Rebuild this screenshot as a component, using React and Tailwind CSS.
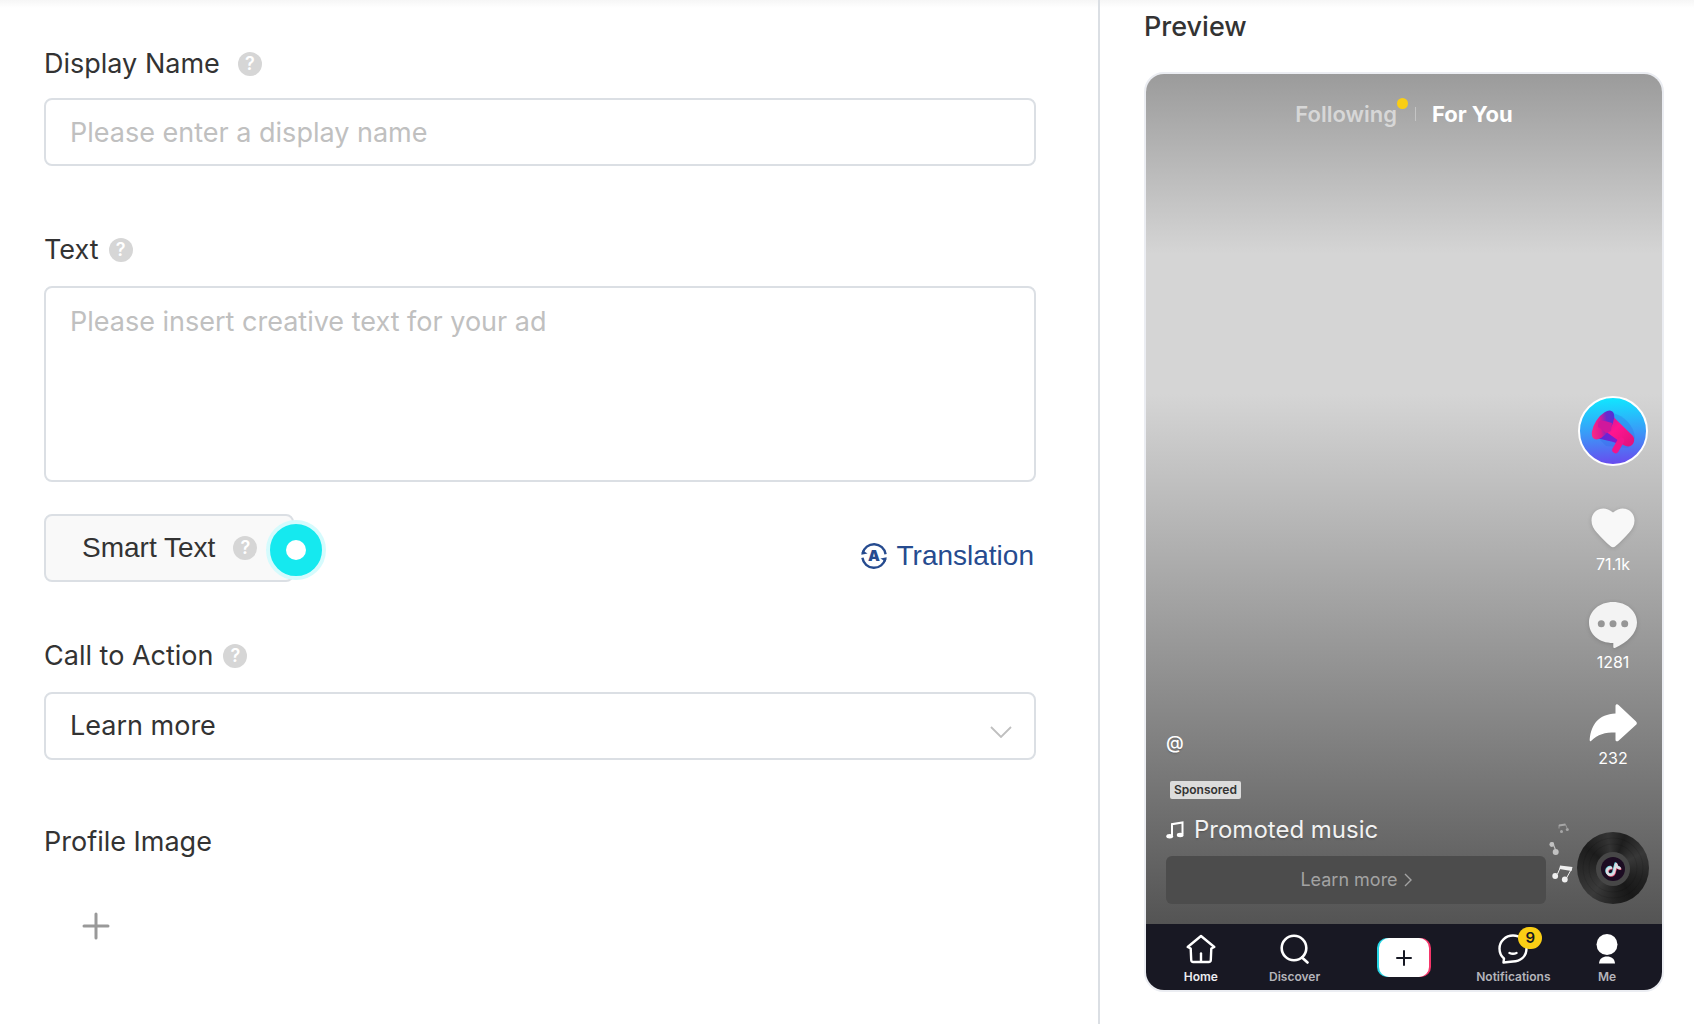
import { useState } from 'react'

function Hint({ label }) {
  return (
    <span
      role="img"
      aria-label={label}
      className="flex size-6 shrink-0 items-center justify-center rounded-full bg-[#d6d6d6] font-['Inter',sans-serif] text-lg leading-none font-semibold text-white"
    >
      ?
    </span>
  )
}

function TranslateIcon() {
  return (
    <svg viewBox="0 0 26 26" className="size-[26px]" fill="none" stroke="currentColor" strokeWidth="2.4" aria-hidden="true">
      <path d="M1.6 10.400A11.700 11.700 0 0 1 24.600 11.200" />
      <path d="M24.400 15.600A11.700 11.700 0 0 1 1.400 14.800" />
      <path d="M.3 11.800 1.200 7.200 6.600 10.400Z" fill="currentColor" stroke="none" />
      <path d="M25.700 14.200 24.800 18.800 19.400 15.600Z" fill="currentColor" stroke="none" />
      <text x="13" y="18.400" textAnchor="middle" fontSize="15" fontWeight="900" fontFamily="Inter, sans-serif" fill="currentColor" stroke="none">A</text>
    </svg>
  )
}

function MegaphoneAvatar() {
  return (
    <svg viewBox="0 0 70 70" className="size-[70px]" aria-hidden="true">
      <defs>
        <linearGradient id="avatar-bg" x1="0.5" y1="0" x2="0.55" y2="1">
          <stop offset="0" stopColor="#0fe9ff" />
          <stop offset="0.5" stopColor="#389df8" />
          <stop offset="1" stopColor="#6a48ee" />
        </linearGradient>
        <linearGradient id="cone" x1="0.1" y1="0.2" x2="0.9" y2="0.9">
          <stop offset="0" stopColor="#c2189f" />
          <stop offset="0.45" stopColor="#ff1590" />
          <stop offset="1" stopColor="#e3137f" />
        </linearGradient>
        <linearGradient id="mouth" x1="0.8" y1="0" x2="0.2" y2="1">
          <stop offset="0" stopColor="#4a35d8" />
          <stop offset="0.35" stopColor="#6a2bcc" />
          <stop offset="0.6" stopColor="#e01a94" />
          <stop offset="1" stopColor="#ff2f80" />
        </linearGradient>
        <linearGradient id="cone-shade" x1="0" y1="0" x2="1" y2="0">
          <stop offset="0" stopColor="#4f2fdc" />
          <stop offset="1" stopColor="#8a18cc" />
        </linearGradient>
      </defs>
      <circle cx="35" cy="35" r="34" fill="url(#avatar-bg)" stroke="#fff" strokeWidth="2" />
      <path d="M35 17C46 20 56 29 57 42L50 52 28 50 22 44Z" fill="#2f6be4" opacity="0.3" />
      <path d="M34.500 16.500 36.500 22 54.500 39.500C58 43 56 50.500 50 50.500 47 50.500 44 48 40 45.500L20 42.500 24 28Z" fill="url(#cone)" />
      <path d="M19 42.500 27 35 41 45 38 47C32 45 26 43.500 19 42.500Z" fill="url(#cone-shade)" />
      <path d="M43 44.500 37.500 54" stroke="#f3158c" strokeWidth="6.500" strokeLinecap="round" />
      <ellipse cx="25" cy="29" rx="8" ry="16.500" transform="rotate(33 25 29)" fill="url(#mouth)" />
      <path d="M20.500 25.500C25 23.500 29 26 34 27L33 35 28 37C26 35 24 33 20 31Z" fill="#d0189c" />
    </svg>
  )
}

function HeartIcon() {
  return (
    <svg viewBox="0 0 44 40" className="h-10 w-11 drop-shadow-sm" fill="#f8f8f8" aria-hidden="true">
      <path d="M22 4.600C18.500 1.500 15.500.5 12.300.5 5.500.5.500 5.800.500 12.500c0 5 2.200 8.500 5.500 12.200C10 29.200 15 34.200 19.600 38.300c1.500 1.300 3.300 1.300 4.800 0C29 34.200 34 29.200 38 24.700c3.300-3.700 5.500-7.200 5.500-12.200C43.500 5.800 38.500.5 31.700.5c-3.200 0-6.200 1-9.700 4.100Z" />
    </svg>
  )
}

function CommentIcon() {
  return (
    <svg viewBox="0 0 48 44" className="h-11 w-12 overflow-visible drop-shadow-sm" aria-hidden="true">
      <path d="M24 0C10.500 0 0 9 0 20.500 0 32.500 10 41 24.300 41v4c0 1 .7 1.300 1.600.9C38 40.500 48 31.500 48 20.500 48 9 37.500 0 24 0Z" fill="#f3f3f3" />
      <circle cx="12.300" cy="21.700" r="3.500" fill="#969696" />
      <circle cx="24" cy="21.700" r="3.500" fill="#969696" />
      <circle cx="35.700" cy="21.700" r="3.500" fill="#969696" />
    </svg>
  )
}

function ShareIcon() {
  return (
    <svg viewBox="0 -4 48 42" className="h-[42px] w-12" fill="#fff" aria-hidden="true">
      <path d="M26.500 2C26.500.4 28.200-.2 29.500.9L46.800 17.200c1.400 1.300 1.400 2.600 0 3.900L29.500 36.800c-1.300 1.100-3 .5-3-1.100V28.400C16 28.400 8.500 30 2.600 36.600 1.300 38 .5 37 .7 35.200 2.500 20 9.500 10.200 26.500 9.400Z" />
    </svg>
  )
}

function NoteIcon() {
  return (
    <svg viewBox="0 0 18 18" className="size-[18px]" aria-hidden="true">
      <path d="M6 14.500V3.200L16.500 1.500V13" fill="none" stroke="#fff" strokeWidth="2" />
      <ellipse cx="3.700" cy="15.200" rx="3.400" ry="2.200" fill="#fff" />
      <ellipse cx="14.200" cy="14" rx="3.400" ry="2.200" fill="#fff" />
    </svg>
  )
}

function FloatingNotes() {
  return (
    <svg viewBox="0 0 26 64" className="absolute right-full bottom-5 mr-0.5 h-16 w-[26px]" aria-hidden="true">
      <g stroke="#fff" fill="#fff" opacity="0.4">
        <path d="M10 5.500 16.500 4.500" fill="none" strokeWidth="2" />
        <path d="M10 8.500 10 5M16.500 4.500 18 8" fill="none" strokeWidth="0.800" />
        <circle cx="12.500" cy="11.500" r="1.500" stroke="none" />
        <circle cx="18.300" cy="9.500" r="1.500" stroke="none" />
      </g>
      <g stroke="#fff" fill="#fff" opacity="0.6">
        <path d="M7 31 3.500 22.500" fill="none" strokeWidth="1.200" />
        <circle cx="2.800" cy="24.500" r="2.400" stroke="none" />
        <circle cx="6.700" cy="32" r="3" stroke="none" />
      </g>
      <g stroke="#fff" fill="#fff" opacity="0.9">
        <path d="M8.500 54 11.500 47M22.500 49 17.500 58" fill="none" strokeWidth="1" />
        <path d="M11 45.500 23.500 47 22.500 51 10.500 49Z" stroke="none" />
        <circle cx="6.200" cy="56" r="2.900" stroke="none" />
        <circle cx="15.800" cy="59.500" r="2.900" stroke="none" />
      </g>
    </svg>
  )
}

function Disc() {
  return (
    <div className="relative size-[72px] rounded-full bg-[conic-gradient(from_20deg,#1e1e1e,#383838_12%,#222_25%,#181818_35%,#202020_42%,#3a3a3a_55%,#2a2a2a_68%,#1c1c1c_80%,#343434_92%,#1e1e1e)]">
      <FloatingNotes />
      <svg viewBox="0 0 72 72" className="size-[72px]" fill="none" aria-hidden="true">
        <circle cx="36" cy="36" r="30" stroke="#000" strokeOpacity="0.1" />
        <circle cx="36" cy="36" r="24" stroke="#000" strokeOpacity="0.1" />
        <circle cx="36" cy="37" r="17" fill="#474747" />
        <circle cx="36" cy="37" r="12" fill="#1c0c22" />
        <g strokeWidth="2.400" strokeLinecap="round" transform="rotate(15 36 37)">
          <path d="M38.500 32 38.500 39.500A3.600 3.600 0 1 1 34.500 36.800M38.500 32Q39.500 35 43 35" stroke="#f0567a" />
          <path d="M37 31 37 38.500A3.600 3.600 0 1 1 33 35.800M37 31Q38 34 41.500 34" stroke="#6fd9e0" />
          <path d="M37.800 31.500 37.800 39A3.600 3.600 0 1 1 33.800 36.300M37.800 31.500Q38.800 34.500 42.300 34.500" stroke="#dcdce2" />
        </g>
      </svg>
    </div>
  )
}

function HomeIcon() {
  return (
    <svg viewBox="0 0 30 30" className="size-[30px]" fill="none" stroke="#fff" strokeWidth="2.400" strokeLinejoin="round" strokeLinecap="round" aria-hidden="true">
      <path d="M15 2 28.300 13 25.300 14.500 24.800 26Q24.700 28 22.700 28H7.300Q5.300 28 5.200 26L4.700 14.500 1.700 13Z" />
      <path d="M15 19.500V27" />
    </svg>
  )
}

function DiscoverIcon() {
  return (
    <svg viewBox="0 0 30 30" className="size-[30px]" fill="none" stroke="#fff" strokeWidth="2.600" strokeLinecap="round" aria-hidden="true">
      <circle cx="14" cy="14" r="12.300" />
      <path d="M22 23.500 27.500 28.500" />
    </svg>
  )
}

function InboxIcon() {
  return (
    <svg viewBox="0 0 30 30" className="size-[30px]" fill="none" stroke="#fff" strokeWidth="2.400" strokeLinecap="round" strokeLinejoin="round" aria-hidden="true">
      <path d="M15 1.500A13.500 13 0 0 1 28.500 14.500C28.500 23 22 27.500 15 27.500L5.500 28.500 6 24.500C3 22 1.500 18.500 1.500 14.500A13.500 13 0 0 1 15 1.500Z" />
      <path d="M11.500 19Q15 20.500 18.500 19" />
    </svg>
  )
}

function MeIcon() {
  return (
    <svg viewBox="0 0 30 30" className="size-[30px]" fill="#fff" aria-hidden="true">
      <circle cx="15" cy="10.500" r="10.500" />
      <path d="M7 29.500C7.500 24.500 10.500 22.500 15 22.500S22.500 24.500 23 29.500Z" />
    </svg>
  )
}

function RailButton({ icon, count, label }) {
  return (
    <button type="button" aria-label={label} className="flex flex-col items-center gap-1.5 text-base leading-5 text-white">
      {icon}
      {count}
    </button>
  )
}

function NavButton({ icon, label, badge, active }) {
  return (
    <button
      type="button"
      className={`flex flex-3 flex-col items-center gap-[3px] text-xs leading-5 font-semibold ${active ? 'text-[#ececf0]' : 'text-[#b4b4ba]'}`}
    >
      <span className="relative">
        {icon}
        {badge && (
          <span className="absolute -top-[7px] left-5 flex h-[22px] w-6 items-center justify-center rounded-full bg-[#face15] text-[15px] text-[#161823]">
            {badge}
          </span>
        )}
      </span>
      {label}
    </button>
  )
}

function PhonePreview({ name, cta }) {
  return (
    <div className="overflow-hidden rounded-[20px] border-2 border-[#ebedf2]">
      <div className="flex min-h-[850px] flex-col bg-[linear-gradient(#9b9b9b_0px,#d5d5d5_180px,#d5d5d5_320px,#545454_850px)]">
        <div className="flex items-center justify-center pt-6 text-[22px] leading-8 font-semibold">
          <button type="button" className="relative text-[#d7d7d7]">
            Following
            <span className="absolute top-0 left-full size-[11px] rounded-full bg-[#face15]" />
          </button>
          <span className="mr-4 ml-[18px] h-3.5 w-px bg-[#c4c4c4]" />
          <button type="button" className="font-bold text-white">For You</button>
        </div>

        <div className="flex flex-1 items-end gap-[31px] pr-[13px] pb-5 pl-5">
          <div className="flex flex-1 flex-col items-start text-white">
            <p className="text-lg leading-6 font-medium text-shadow-sm">@{name}</p>
            <span className="mt-6.5 ml-1 rounded-xs bg-[#dcdcdc] px-1 text-xs leading-[18px] font-semibold text-[#333]">
              Sponsored
            </span>
            <p className="mt-[15px] flex items-center gap-2.5 text-2xl leading-8 text-[#f2f2f2] text-shadow-sm">
              <NoteIcon />
              Promoted music
            </p>
            <button type="button" className="mt-2.5 flex h-12 w-full items-center justify-center gap-1.5 rounded-md bg-[#4c4c4c] text-lg text-[#a3a3a3]">
              {cta}
              <svg viewBox="0 0 8 14" className="h-3.5 w-2" fill="none" stroke="currentColor" strokeWidth="1.400" aria-hidden="true">
                <path d="M1 1 7 7 1 13" />
              </svg>
            </button>
          </div>

          <div className="flex w-[72px] flex-col items-center gap-7">
            <button type="button" aria-label="Advertiser profile" className="mb-3.5">
              <MegaphoneAvatar />
            </button>
            <RailButton label="Like" icon={<HeartIcon />} count="71.1k" />
            <RailButton label="Comment" icon={<CommentIcon />} count="1281" />
            <RailButton label="Share" icon={<ShareIcon />} count="232" />
            <div className="mt-9">
              <Disc />
            </div>
          </div>
        </div>
      </div>

      <nav aria-label="App navigation" className="flex h-[66px] items-start bg-[#181823] px-2 pt-2.5">
        <NavButton icon={<HomeIcon />} label="Home" active />
        <NavButton icon={<DiscoverIcon />} label="Discover" />
        <div className="flex flex-4 justify-center pt-1">
          <button
            type="button"
            aria-label="Create"
            className="flex h-[39px] w-[54px] items-center justify-center rounded-[10px] bg-[linear-gradient(90deg,#25d5e4_50%,#f5366a_50%)] px-0.5"
          >
            <span className="flex h-full w-full items-center justify-center rounded-[10px] bg-white">
              <svg viewBox="0 0 16 16" className="size-4" stroke="#161823" strokeWidth="2" strokeLinecap="round" aria-hidden="true">
                <path d="M8 1V15M1 8H15" />
              </svg>
            </span>
          </button>
        </div>
        <NavButton icon={<InboxIcon />} label="Notifications" badge="9" />
        <NavButton icon={<MeIcon />} label="Me" />
      </nav>
    </div>
  )
}

const CTA_OPTIONS = ['Learn more', 'Download now', 'Shop now', 'Sign up', 'Contact us']

export default function App() {
  const [name, setName] = useState('')
  const [text, setText] = useState('')
  const [cta, setCta] = useState('Learn more')

  return (
    <div className="relative flex min-h-screen bg-white font-['Inter',sans-serif] text-[#333]">
      <div className="pointer-events-none absolute inset-x-0 top-0 h-2 bg-linear-to-b from-[#f6f6f6] to-white" />

      <main className="relative flex-1 pt-11 pr-[62px] pl-11 text-[27px] leading-10">
        <div className="mb-3.5 flex items-center gap-[18px]">
          <label htmlFor="display-name">Display Name</label>
          <Hint label="About display name" />
        </div>
        <input
          id="display-name"
          type="text"
          value={name}
          onChange={(e) => setName(e.target.value)}
          placeholder="Please enter a display name"
          className="block h-[68px] w-full rounded-lg border-2 border-[#dbdfe4] bg-white px-6 placeholder:text-[#c0c0c0] focus:outline-none"
        />

        <div className="mt-16 mb-4 flex items-center gap-2.5">
          <label htmlFor="ad-text">Text</label>
          <Hint label="About ad text" />
        </div>
        <textarea
          id="ad-text"
          value={text}
          onChange={(e) => setText(e.target.value)}
          placeholder="Please insert creative text for your ad"
          className="block h-[196px] w-full resize-none rounded-lg border-2 border-[#dbdfe4] bg-white px-6 py-3.5 placeholder:text-[#c0c0c0] focus:outline-none"
        />

        <div className="mt-8 flex items-center justify-between font-['Liberation_Sans',sans-serif] text-[28px]">
          <button type="button" className="relative flex h-[68px] w-[250px] items-center gap-[18px] rounded-lg border-2 border-[#dbdfe4] bg-[#f9f9f9] pl-9">
            Smart Text
            <Hint label="About smart text" />
            <span className="absolute top-1 -right-[34px] flex size-[60px] items-center justify-center rounded-full border-4 border-[#d5fbfd] bg-[#15e9ef]">
              <span className="size-5 rounded-full bg-white" />
            </span>
          </button>
          <a href="#translation" className="mt-4 flex items-center gap-2.5 pr-0.5 text-[#264b8f]">
            <TranslateIcon />
            Translation
          </a>
        </div>

        <div className="mt-[54px] mb-4 flex items-center gap-2.5">
          <label htmlFor="cta">Call to Action</label>
          <Hint label="About call to action" />
        </div>
        <div className="relative">
          <select
            id="cta"
            value={cta}
            onChange={(e) => setCta(e.target.value)}
            className="block h-[68px] w-full appearance-none rounded-lg border-2 border-[#dbdfe4] bg-white px-6 focus:outline-none"
          >
            {CTA_OPTIONS.map((o) => (
              <option key={o}>{o}</option>
            ))}
          </select>
          <svg viewBox="0 0 22 12" className="pointer-events-none absolute right-6 bottom-[22px] h-3 w-[22px]" fill="none" stroke="#bfbfbf" strokeWidth="1.800" aria-hidden="true">
            <path d="M1 1 11 11 21 1" />
          </svg>
        </div>

        <h2 className="mt-[62px]">Profile Image</h2>
        <button type="button" aria-label="Upload profile image" className="mt-3 flex size-[104px] items-center justify-center">
          <svg viewBox="0 0 28 28" className="size-7" stroke="#999" strokeWidth="3" strokeLinecap="round" aria-hidden="true">
            <path d="M14 2V26M2 14H26" />
          </svg>
        </button>
      </main>

      <aside className="relative w-[596px] shrink-0 border-l-2 border-[#dbdfe4] pt-[7px] pr-[30px] pb-8 pl-11">
        <h2 className="mb-[25px] text-[27px] leading-10 font-medium">Preview</h2>
        <PhonePreview name={name} cta={cta} />
      </aside>
    </div>
  )
}
